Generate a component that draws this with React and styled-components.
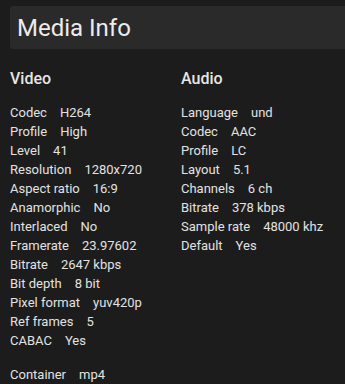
import React from 'react';
import styled, { createGlobalStyle } from 'styled-components';

const GlobalStyle = createGlobalStyle`
    html, body {
        margin: 0;
        padding: 0;
        background: #1c1c1c;
        overflow: hidden;
    }
    body {
        font-family: Roboto, "Noto Sans", sans-serif;
        color: #e2e2e2;
    }
`;

const Page = styled.div`
    width: 345px;
    height: 384px;
    overflow: hidden;
`;

const TitleBar = styled.div`
    margin: 6px -20px 0 10px;
    height: 43px;
    padding-left: 7px;
    display: flex;
    align-items: center;
    background: #2a2a2a;
    border-radius: 3px;
`;

const Title = styled.h1`
    margin: 0;
    font-size: 24px;
    font-weight: 400;
    color: #ececec;
    line-height: 1;
`;

const Body = styled.div`
    padding: 20px 10px 0;
`;

const Columns = styled.div`
    display: grid;
    grid-template-columns: 171px 1fr;
`;

const Heading = styled.h2`
    margin: 0 0 14px;
    font-size: 16px;
    line-height: 20px;
    font-weight: 500;
    color: #e6e6e6;
`;

const Row = styled.div`
    font-size: 13px;
    line-height: 19px;
    white-space: nowrap;
    margin-top: ${(p) => (p.$gap ? '15px' : '0')};
`;

const Label = styled.span`
    margin-right: 13px;
`;

const video = [
    ['Codec', 'H264'],
    ['Profile', 'High'],
    ['Level', '41'],
    ['Resolution', '1280x720'],
    ['Aspect ratio', '16:9'],
    ['Anamorphic', 'No'],
    ['Interlaced', 'No'],
    ['Framerate', '23.97602'],
    ['Bitrate', '2647 kbps'],
    ['Bit depth', '8 bit'],
    ['Pixel format', 'yuv420p'],
    ['Ref frames', '5'],
    ['CABAC', 'Yes'],
];

const audio = [
    ['Language', 'und'],
    ['Codec', 'AAC'],
    ['Profile', 'LC'],
    ['Layout', '5.1'],
    ['Channels', '6 ch'],
    ['Bitrate', '378 kbps'],
    ['Sample rate', '48000 khz'],
    ['Default', 'Yes'],
];

function InfoRow({ label, value, gap }) {
    return (
        <Row $gap={gap}>
            <Label>{label}</Label>
            {value}
        </Row>
    );
}

function App() {
    return (
        <Page>
            <GlobalStyle />
            <TitleBar>
                <Title>Media Info</Title>
            </TitleBar>
            <Body>
                <Columns>
                    <div>
                        <Heading>Video</Heading>
                        {video.map(([l, v]) => (
                            <InfoRow key={l} label={l} value={v} />
                        ))}
                    </div>
                    <div>
                        <Heading>Audio</Heading>
                        {audio.map(([l, v]) => (
                            <InfoRow key={l} label={l} value={v} />
                        ))}
                    </div>
                </Columns>
                <InfoRow label='Container' value='mp4' gap />
            </Body>
        </Page>
    );
}

export default App;
